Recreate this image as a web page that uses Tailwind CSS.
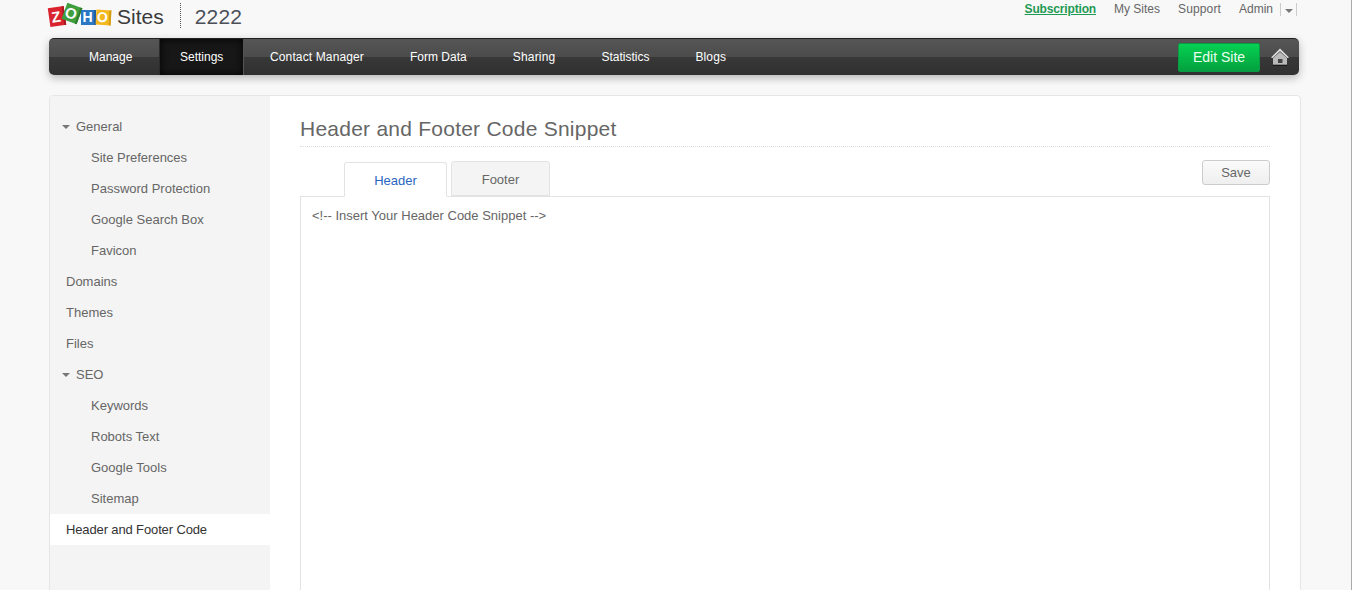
<!DOCTYPE html>
<html>
<head>
<meta charset="utf-8">
<script src="https://cdn.jsdelivr.net/npm/@tailwindcss/browser@4"></script>
</head>
<body class="m-0">
<div class="h-[590px] w-[1352px] overflow-hidden bg-[#f8f8f8] font-['Liberation_Sans',Arial,sans-serif] text-[13px] text-[#666] border-r border-[#aaa]">
  <header class="h-[38px] flex pl-[49px] pr-[54px] justify-between">
    <div class="flex items-start">
      <div class="flex items-center h-[30px] mt-[1px] w-[63px] relative shrink-0">
        <span class="absolute left-0 top-[6px] w-[16px] h-[19px] bg-[#d9232e] text-white font-bold text-[15px] leading-[19px] text-center -rotate-[8deg] border-r-2 border-[#a81a24]">Z</span>
        <span class="absolute left-[15px] top-[4px] w-[16px] h-[17px] bg-[#3f9e3d] text-white font-bold text-[15px] leading-[17px] text-center rotate-[20deg] border-r-2 border-[#2f7d2d]">O</span>
        <span class="absolute left-[32px] top-[9px] w-[15px] h-[15px] bg-[#2a78c5] text-white font-bold text-[14px] leading-[15px] text-center border-r-2 border-[#1f5f9f]">H</span>
        <span class="absolute left-[47px] top-[9px] w-[15px] h-[15px] bg-[#f4b81e] text-white font-bold text-[14px] leading-[15px] text-center rotate-3 border-r-2 border-[#d59e12]">O</span>
      </div>
      <span class="text-[21px] leading-[24px] mt-[5px] ml-[5px] text-[#3a3a3a]">Sites</span>
      <span class="h-[25px] mt-[3px] ml-[16px] border-l border-dotted border-[#555]"></span>
      <span class="text-[21px] leading-[24px] mt-[5px] ml-[14px] text-[#4a4f58] tracking-[0.2px]">2222</span>
    </div>
    <nav class="flex items-start text-[12px] leading-[14px] pt-[2px] text-[#666]">
      <a class="font-bold underline text-[#1f9a54] mr-[18px] tracking-[-0.16px]">Subscription</a>
      <a class="mr-[18px]">My Sites</a>
      <a class="mr-[18px] tracking-[0.13px]">Support</a>
      <a class="mr-[7px]">Admin</a>
      <span class="h-[13px] w-[17px] border-x border-[#ccc] flex items-center justify-center mt-[1px]">
        <span class="w-0 h-0 border-x-[4px] border-x-transparent border-t-[4px] border-t-[#777] mt-[2px]"></span>
      </span>
    </nav>
  </header>

  <div class="mx-[49px] w-[1250px] h-[37px] rounded-[5px] border-t border-[#222] shadow-[0_3px_8px_rgba(0,0,0,0.28)] bg-[linear-gradient(to_bottom,#565656_0%,#4b4b4b_49%,#383838_50%,#303030_100%)] flex items-stretch text-[12px] text-white overflow-hidden">
    <a class="w-[111px] pl-[40px] flex items-center border-r border-[#2b2b2b]">Manage</a>
    <a class="w-[84px] pl-[20px] flex items-center bg-[#171717] shadow-[inset_0_0_8px_rgba(0,0,0,0.9)] border-r border-[#555]">Settings</a>
    <a class="ml-[26px] flex items-center tracking-[0.13px]">Contact Manager</a>
    <a class="ml-[46px] flex items-center">Form Data</a>
    <a class="ml-[46px] flex items-center tracking-[0.2px]">Sharing</a>
    <a class="ml-[46px] flex items-center">Statistics</a>
    <a class="ml-[46px] flex items-center tracking-[0.1px]">Blogs</a>
    <div class="ml-auto flex items-center pr-[10px]">
      <a class="w-[82px] h-[29px] flex items-center justify-center rounded-[2px] border border-[#0a9a45] bg-[linear-gradient(to_bottom,#05d152,#04a03e)] text-[14px] text-[#eafff0]">Edit Site</a>
      <svg class="ml-[11px] w-[18px] h-[18px]" viewBox="0 0 18 18">
        <path d="M9 0.5 L0 9.5 L1.5 10 L9 3 L16.5 10 L18 9.5 Z" fill="#e2e2e2"/>
        <path d="M2 10 L9 4 L16 10 V17 H2 Z" fill="#bababa"/>
        <rect x="7" y="11" width="4.5" height="4" fill="#444"/>
        <rect x="2" y="16.7" width="14" height="1" fill="#111"/>
      </svg>
    </div>
  </div>

  <main class="mt-[20px] mx-[49px] w-[1252px] h-[520px] flex bg-white border border-[#e6e6e6] rounded-[4px] overflow-hidden">
    <aside class="w-[220px] shrink-0 bg-[#f4f4f4] pt-[15px] leading-[31px] text-[#666]">
      <div class="h-[31px] pl-[12px] flex items-center"><span class="w-0 h-0 border-x-[4px] border-x-transparent border-t-[4px] border-t-[#777] mr-[6px]"></span>General</div>
      <div class="h-[31px] pl-[41px]">Site Preferences</div>
      <div class="h-[31px] pl-[41px]">Password Protection</div>
      <div class="h-[31px] pl-[41px]">Google Search Box</div>
      <div class="h-[31px] pl-[41px]">Favicon</div>
      <div class="h-[31px] pl-[16px]">Domains</div>
      <div class="h-[31px] pl-[16px]">Themes</div>
      <div class="h-[31px] pl-[16px]">Files</div>
      <div class="h-[31px] pl-[12px] flex items-center"><span class="w-0 h-0 border-x-[4px] border-x-transparent border-t-[4px] border-t-[#777] mr-[6px]"></span>SEO</div>
      <div class="h-[31px] pl-[41px]">Keywords</div>
      <div class="h-[31px] pl-[41px]">Robots Text</div>
      <div class="h-[31px] pl-[41px]">Google Tools</div>
      <div class="h-[31px] pl-[41px]">Sitemap</div>
      <div class="h-[31px] pl-[16px] bg-white text-[#333] tracking-[-0.13px]">Header and Footer Code</div>
    </aside>
    <section class="w-[970px] ml-[30px] shrink-0">
      <h1 class="text-[21px] tracking-[0.24px] leading-[24px] pt-[21px] pb-[6px] h-[51px] border-b border-dotted border-[#ddd] text-[#666]">Header and Footer Code Snippet</h1>
      <div class="h-[49px] flex relative">
        <a class="absolute left-[44px] top-[15px] w-[103px] h-[35px] z-10 bg-white border border-[#e3e3e3] border-b-white rounded-t-[3px] text-[#2a66c0] flex items-center justify-center pt-[2px]">Header</a>
        <a class="absolute left-[151px] top-[14px] w-[99px] h-[35px] bg-[#f4f4f4] border border-[#e3e3e3] rounded-t-[3px] flex items-center justify-center pt-[2px]">Footer</a>
        <button class="absolute left-[902px] top-[13px] w-[68px] h-[25px] rounded-[3px] border border-[#ccc] bg-[linear-gradient(to_bottom,#fafafa,#efefef)] text-[#666]">Save</button>
      </div>
      <div class="h-[450px] border border-[#e3e3e3] px-[11px] py-[11px] leading-[15px] text-[#666]">&lt;!-- Insert Your Header Code Snippet --&gt;</div>
    </section>
  </main>
</div>
</body>
</html>
